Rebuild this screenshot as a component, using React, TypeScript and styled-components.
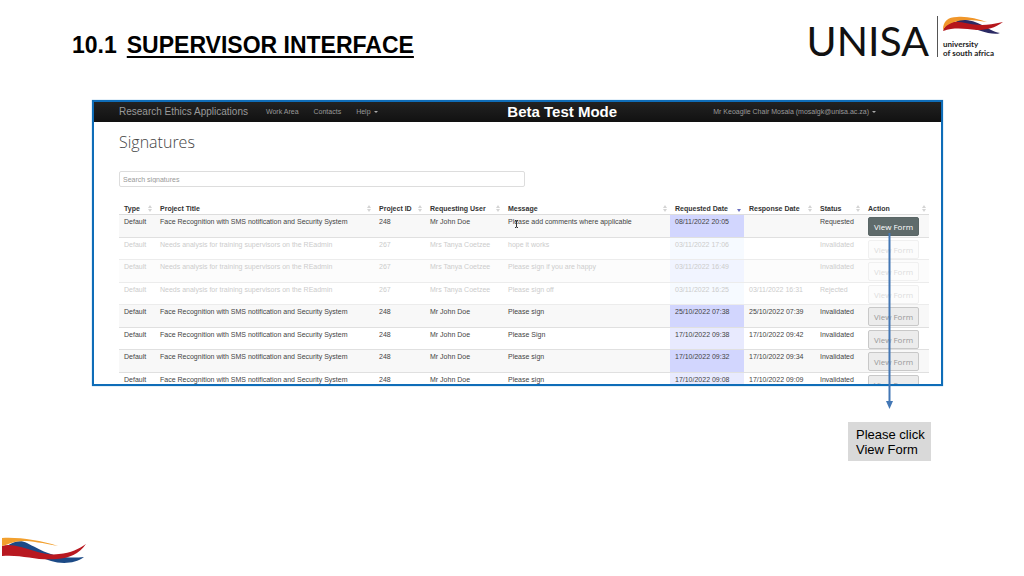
import React from 'react';
import styled, { createGlobalStyle } from 'styled-components';

const GlobalStyle = createGlobalStyle`
  * { box-sizing: border-box; }
  body {
    margin: 0;
    background: #fff;
    font-family: "Liberation Sans", Arial, sans-serif;
  }
`;

const Slide = styled.div`
  display: flex;
  flex-direction: column;
  min-height: 100vh;
  overflow: hidden;
`;

const SlideHeader = styled.header`
  display: flex;
  justify-content: space-between;
  align-items: flex-start;
  height: 100px;
  padding: 16px 20px 0 72px;
`;

const Title = styled.h1`
  display: flex;
  gap: 10px;
  margin: 16px 0 0;
  font-size: 23px;
  line-height: 26px;
  font-weight: 700;
  color: #000;
`;

const TitleText = styled.span`
  text-decoration: underline;
  text-decoration-thickness: 2px;
  text-underline-offset: 3px;
`;

const Brand = styled.div`
  display: flex;
  align-items: flex-start;
`;

const BrandName = styled.span`
  font-family: Lato, sans-serif;
  font-weight: 400;
  font-size: 41px;
  line-height: 50px;
  color: #111;
`;

const BrandSide = styled.div`
  display: flex;
  flex-direction: column;
  height: 41px;
  margin: 0 0 0 8px;
  padding-left: 5px;
  border-left: 1px solid #555;
`;

const BrandTagline = styled.span`
  margin-top: 6px;
  font-family: Lato, sans-serif;
  font-weight: 700;
  font-size: 8px;
  line-height: 9px;
  color: #222;
  white-space: pre-line;
`;

const Figure = styled.main`
  display: flex;
  flex-direction: column;
  margin: 0 81px 0 92px;
`;

const AppFrame = styled.section`
  height: 286px;
  overflow: hidden;
  border: 2px solid #0f6db8;
  box-shadow: 0 0 1px #5fa8dc;
  background: #fff;
`;

const NavBar = styled.nav`
  display: grid;
  grid-template-columns: 3fr auto 2fr;
  align-items: center;
  height: 20px;
  padding: 0 65px 0 25px;
  background: linear-gradient(#222, #111);
`;

const NavGroup = styled.div<{ $end?: boolean }>`
  display: flex;
  align-items: center;
  gap: 15px;
  justify-content: ${(p) => (p.$end ? 'flex-end' : 'flex-start')};
`;

const NavBrand = styled.a`
  margin-right: 3px;
  font-size: 10px;
  line-height: 16px;
  color: #999;
  text-decoration: none;
`;

const NavLink = styled.a`
  display: flex;
  align-items: center;
  gap: 3px;
  font-size: 7px;
  line-height: 16px;
  color: #999;
  text-decoration: none;
`;

const Caret = styled.span`
  border: 2px solid transparent;
  border-top-color: #aaa;
  border-bottom: 0;
`;

const ModeLabel = styled.strong`
  font-size: 15px;
  line-height: 18px;
  color: #fff;
`;

const Content = styled.div`
  padding: 9px 12px 0 25px;
`;

const PageHeading = styled.h2`
  margin: 0;
  font-family: "Open Sans", sans-serif;
  font-weight: 300;
  font-size: 16px;
  line-height: 22px;
  color: #444;
`;

const Search = styled.input`
  display: block;
  width: 406px;
  max-width: 100%;
  height: 16px;
  margin: 18px 0 15px;
  padding: 0 3px;
  border: 1px solid #ddd;
  border-radius: 2px;
  font-family: inherit;
  font-size: 7px;
  color: #555;
  background: #fff;
  &::placeholder { color: #999; opacity: 1; }
`;

const Table = styled.table`
  width: 100%;
  table-layout: fixed;
  border-collapse: separate;
  border-spacing: 0;
  font-size: 7px;
  line-height: 9px;
  color: #444;
`;

const Col = styled.col<{ $w?: number }>`
  width: ${(p) => (p.$w ? `${p.$w}px` : 'auto')};
`;

const HeadCell = styled.th`
  height: 13px;
  padding: 0 3px 0 5px;
  border-bottom: 1px solid #ddd;
  text-align: left;
  font-weight: 700;
  color: #333;
  white-space: nowrap;
`;

const HeadInner = styled.div`
  display: flex;
  align-items: center;
  justify-content: space-between;
`;

const SortIcon = styled.svg`
  flex: none;
  width: 4px;
  height: 7px;
`;

const Row = styled.tr<{ $faded: boolean }>`
  height: 23px;
  background: ${(p) => (p.$faded ? '#fcfcfc' : '#f8f8f8')};
  color: ${(p) => (p.$faded ? '#ccc' : '#444')};
  --date: ${(p) => (p.$faded ? '#f1f4ff' : '#d2d6fe')};
  --line: ${(p) => (p.$faded ? '#ececec' : '#e0e0e0')};
  &:nth-child(even) {
    height: 22px;
    background: #fff;
    --date: ${(p) => (p.$faded ? '#f6faff' : '#e8eafe')};
  }
`;

const Cell = styled.td<{ $sorted?: boolean }>`
  position: relative;
  padding: 2px 0 0 5px;
  border-bottom: 1px solid var(--line);
  vertical-align: top;
  white-space: nowrap;
  background: ${(p) => (p.$sorted ? 'var(--date)' : 'transparent')};
`;

const FormButton = styled.button<{ $kind: 'active' | 'off' | 'faded' }>`
  display: block;
  width: 51px;
  height: 19px;
  padding: 0;
  border-radius: 2px;
  font-family: "Open Sans", sans-serif;
  font-size: 8px;
  line-height: 16px;
  border: 1px solid ${(p) => ({ active: '#5a6666', off: '#c8c8c8', faded: '#f0f0f0' })[p.$kind]};
  background: ${(p) => ({ active: '#5f6b6b', off: '#ececec', faded: '#fcfcfc' })[p.$kind]};
  color: ${(p) => ({ active: '#fff', off: '#999', faded: '#ddd' })[p.$kind]};
`;

const TextCursor = styled.svg`
  position: absolute;
  left: 11px;
  top: 5px;
  width: 5px;
  height: 8px;
`;

const Callout = styled.aside`
  position: relative;
  align-self: flex-end;
  width: 83px;
  margin: 36px 12px 0 0;
  padding: 5px 0 4px 8px;
  background: #d9d9d9;
  font-size: 13px;
  line-height: 15px;
  color: #000;
  white-space: pre-line;
`;

const Arrow = styled.svg`
  position: absolute;
  left: 37px;
  bottom: calc(100% + 13px);
  width: 9px;
  height: 176px;
`;

const SlideFooter = styled.footer`
  margin-top: auto;
  padding: 0 0 12px 1px;
`;

const FooterMark = styled.svg`
  display: block;
  width: 86px;
  height: 28px;
`;

const BrandMark = styled.svg`
  flex: none;
  width: 61px;
  height: 18px;
`;

const columns: { label: string; width?: number }[] = [
  { label: 'Type', width: 36 },
  { label: 'Project Title', width: 219 },
  { label: 'Project ID', width: 51 },
  { label: 'Requesting User', width: 78 },
  { label: 'Message' },
  { label: 'Requested Date', width: 74 },
  { label: 'Response Date', width: 71 },
  { label: 'Status', width: 48 },
  { label: 'Action', width: 66 },
];

const FACE = 'Face Recognition with SMS notification and Security System';
const NEEDS = 'Needs analysis for training supervisors on the REadmin';

type Kind = 'active' | 'off' | 'faded';
const rows: { kind: Kind; cells: string[] }[] = [
  { kind: 'active', cells: ['Default', FACE, '248', 'Mr John Doe', 'Please add comments where applicable', '08/11/2022 20:05', '', 'Requested'] },
  { kind: 'faded', cells: ['Default', NEEDS, '267', 'Mrs Tanya Coetzee', 'hope it works', '03/11/2022 17:06', '', 'Invalidated'] },
  { kind: 'faded', cells: ['Default', NEEDS, '267', 'Mrs Tanya Coetzee', 'Please sign if you are happy', '03/11/2022 16:49', '', 'Invalidated'] },
  { kind: 'faded', cells: ['Default', NEEDS, '267', 'Mrs Tanya Coetzee', 'Please sign off', '03/11/2022 16:25', '03/11/2022 16:31', 'Rejected'] },
  { kind: 'off', cells: ['Default', FACE, '248', 'Mr John Doe', 'Please sign', '25/10/2022 07:38', '25/10/2022 07:39', 'Invalidated'] },
  { kind: 'off', cells: ['Default', FACE, '248', 'Mr John Doe', 'Please Sign', '17/10/2022 09:38', '17/10/2022 09:42', 'Invalidated'] },
  { kind: 'off', cells: ['Default', FACE, '248', 'Mr John Doe', 'Please sign', '17/10/2022 09:32', '17/10/2022 09:34', 'Invalidated'] },
  { kind: 'off', cells: ['Default', FACE, '248', 'Mr John Doe', 'Please sign', '17/10/2022 09:08', '17/10/2022 09:09', 'Invalidated'] },
];

function Sort({ active }: { active: boolean }) {
  return (
    <SortIcon viewBox="0 0 4 7" aria-hidden="true">
      {active ? (
        <path d="M0 4h4L2 7z" fill="#6a6fc0" />
      ) : (
        <path d="M0 3L2 0l2 3zM0 4h4L2 7z" fill="#d4d4d4" />
      )}
    </SortIcon>
  );
}

export default function App() {
  return (
    <Slide>
      <GlobalStyle />
      <SlideHeader>
        <Title>
          <span>10.1</span>
          <TitleText>SUPERVISOR INTERFACE</TitleText>
        </Title>
        <Brand>
          <BrandName>UNISA</BrandName>
          <BrandSide>
            <BrandMark viewBox="0 0 61 18" aria-hidden="true">
              <path d="M12 5C22 2 31 5 39 9C45 12 50 16 57 17C53 19 44 17 38 15C28 12 20 9 12 5Z" fill="#2b2a63" />
              <path d="M0 15C2 8 8 5 16 6C27 7 36 12 60 6C52 12 44 14 34 14C22 13 12 11 0 15Z" fill="#b5161b" />
              <path d="M0 14C0 5 5 1 14 1C24 0 34 3 44 6C32 4 22 3 15 5C7 7 3 9 0 14Z" fill="#f0962a" />
            </BrandMark>
            <BrandTagline>{'university\nof south africa'}</BrandTagline>
          </BrandSide>
        </Brand>
      </SlideHeader>

      <Figure>
        <AppFrame>
          <NavBar>
            <NavGroup>
              <NavBrand href="#">Research Ethics Applications</NavBrand>
              <NavLink href="#">Work Area</NavLink>
              <NavLink href="#">Contacts</NavLink>
              <NavLink href="#">Help<Caret /></NavLink>
            </NavGroup>
            <ModeLabel>Beta Test Mode</ModeLabel>
            <NavGroup $end>
              <NavLink href="#">Mr Keoagile Chair Mosala (mosalgk@unisa.ac.za)<Caret /></NavLink>
            </NavGroup>
          </NavBar>
          <Content>
            <PageHeading>Signatures</PageHeading>
            <Search type="text" aria-label="Search signatures" placeholder="Search signatures" />
            <Table>
              <colgroup>
                {columns.map((c) => <Col key={c.label} $w={c.width} />)}
              </colgroup>
              <thead>
                <tr>
                  {columns.map((c) => (
                    <HeadCell key={c.label} scope="col">
                      <HeadInner>
                        {c.label}
                        <Sort active={c.label === 'Requested Date'} />
                      </HeadInner>
                    </HeadCell>
                  ))}
                </tr>
              </thead>
              <tbody>
                {rows.map((row, r) => (
                  <Row key={r} $faded={row.kind === 'faded'}>
                    {row.cells.map((text, c) => (
                      <Cell key={c} $sorted={c === 5}>
                        {text}
                        {r === 0 && c === 4 && (
                          <TextCursor viewBox="0 0 5 8" aria-hidden="true">
                            <path d="M1 .5h1l.5.5.5-.5h1M2.5 1v6M1 7.5h1l.5-.5.5.5h1" fill="none" stroke="#333" strokeWidth="1" />
                          </TextCursor>
                        )}
                      </Cell>
                    ))}
                    <Cell>
                      <FormButton type="button" $kind={row.kind} disabled={row.kind !== 'active'}>View Form</FormButton>
                    </Cell>
                  </Row>
                ))}
              </tbody>
            </Table>
          </Content>
        </AppFrame>
        <Callout>
          {'Please click\nView Form'}
          <Arrow viewBox="0 0 9 176" aria-hidden="true">
            <path d="M4.5 0V170" stroke="#4377b5" strokeWidth="2" />
            <path d="M1 168h7l-3.5 8z" fill="#4377b5" />
          </Arrow>
        </Callout>
      </Figure>

      <SlideFooter>
        <FooterMark viewBox="0 0 86 28" aria-hidden="true">
          <path d="M6 10C13 5 20 4 26 7C40 14 54 24 83 21C74 28 60 28 50 25L20 15Z" fill="#1c4a86" />
          <path d="M1 10C6 8 12 9 20 11C34 15 46 20 58 18C70 17 78 13 85 8C78 18 68 22 56 23C36 25 20 18 1 20Z" fill="#b81820" />
          <path d="M1 2C18 1 38 4 57 10C42 7 30 5 22 5C14 5 8 8 1 10Z" fill="#f2a02e" />
        </FooterMark>
      </SlideFooter>
    </Slide>
  );
}
